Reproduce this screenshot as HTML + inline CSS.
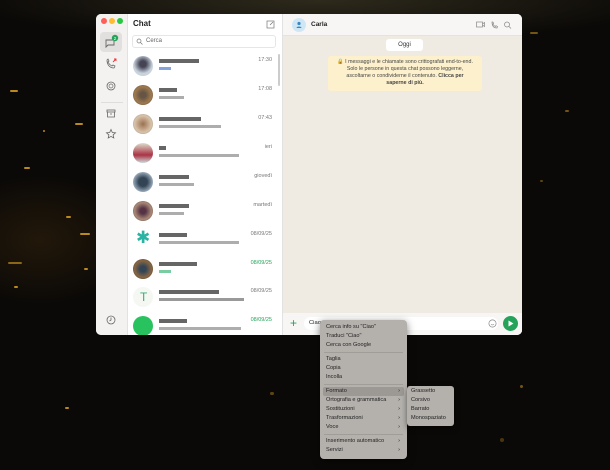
<!DOCTYPE html>
<html><head><meta charset="utf-8"><style>
*{margin:0;padding:0;box-sizing:border-box}
body{width:610px;height:470px;overflow:hidden;position:relative;font-family:"Liberation Sans",sans-serif;
background:radial-gradient(ellipse 500px 60px at 320px 0px,#2e2a1c 0%,rgba(0,0,0,0) 70%),radial-gradient(ellipse 120px 80px at 40px 240px,#22180a 0%,rgba(0,0,0,0) 80%),#0b0907;}
.l{position:absolute;background:#d9a020;border-radius:2px;opacity:.85}
.win{position:absolute;left:96px;top:14px;width:426px;height:321px;background:#fff;border-radius:5px;overflow:hidden}
.side{position:absolute;left:0;top:0;width:32px;height:321px;background:#f3f2f1;border-right:1px solid #e2e2e2}
.list{position:absolute;left:32px;top:0;width:155px;height:321px;background:#fff;border-right:1px solid #e2e2e2}
.conv{position:absolute;left:187px;top:0;width:239px;height:321px;background:#efeae2}
.dot{position:absolute;top:4px;width:6px;height:6px;border-radius:50%}
.row{position:absolute;left:0;width:152px;height:29px}
.av{position:absolute;left:5px;top:4px;width:20px;height:20px;border-radius:50%}
.nm{position:absolute;left:31px;top:7px;height:4px;background:#333;opacity:.75}
.ms{position:absolute;left:31px;top:15px;height:3px;background:#777;opacity:.6}
.tm{position:absolute;right:8px;top:5px;font-size:5.5px;color:#777}
.menu{position:absolute;left:320px;top:320px;width:87px;height:139px;background:#b4b1ad;border-radius:4px;box-shadow:0 2px 8px rgba(0,0,0,.5);font-size:5.6px;color:#222}
.mi{position:absolute;left:6px;height:9px;line-height:9px;width:80px}
.ar{position:absolute;right:6px;top:0}
.sep{position:absolute;left:4px;right:4px;height:1px;background:#a09d99}
.sub{position:absolute;left:407px;top:386px;width:47px;height:40px;background:#b4b1ad;border-radius:3px;box-shadow:0 2px 6px rgba(0,0,0,.5);font-size:5.6px;color:#222}
</style></head><body>
<div class="l" style="left:10px;top:90px;width:8px;height:2px"></div>
<div class="l" style="left:75px;top:123px;width:8px;height:2px"></div>
<div class="l" style="left:24px;top:167px;width:6px;height:2px"></div>
<div class="l" style="left:66px;top:216px;width:5px;height:2px"></div>
<div class="l" style="left:80px;top:233px;width:10px;height:2px"></div>
<div class="l" style="left:8px;top:262px;width:14px;height:2px;opacity:.6"></div>
<div class="l" style="left:14px;top:286px;width:4px;height:2px"></div>
<div class="l" style="left:43px;top:130px;width:2px;height:2px"></div>
<div class="l" style="left:84px;top:268px;width:4px;height:2px"></div>
<div class="l" style="left:530px;top:32px;width:8px;height:2px;opacity:.5"></div>
<div class="l" style="left:565px;top:110px;width:4px;height:2px;opacity:.5"></div>
<div class="l" style="left:540px;top:180px;width:3px;height:2px;opacity:.4"></div>
<div class="l" style="left:270px;top:392px;width:4px;height:3px;opacity:.4"></div>
<div class="l" style="left:65px;top:407px;width:4px;height:2px"></div>
<div class="l" style="left:520px;top:385px;width:3px;height:3px;opacity:.5"></div>
<div class="l" style="left:500px;top:438px;width:4px;height:4px;opacity:.3"></div>

<div class="win">
 <div class="side">
  <div class="dot" style="left:5px;background:#fe5f57"></div>
  <div class="dot" style="left:13px;background:#febc2e"></div>
  <div class="dot" style="left:21px;background:#28c840"></div>
  <div style="position:absolute;left:4px;top:18px;width:22px;height:20px;background:#e1e0df;border-radius:4px"></div>
  <svg style="position:absolute;left:4px;top:18px" width="22" height="20" viewBox="0 0 22 20"><path d="M6 13v-5h8v5h-6l-2 2z" fill="none" stroke="#666" stroke-width=".9"/><circle cx="15" cy="6" r="3.2" fill="#25a35a"/><text x="15" y="8" font-size="4.5" fill="#fff" text-anchor="middle" font-family="Liberation Sans">2</text></svg>
  <svg style="position:absolute;left:8px;top:43px" width="14" height="14" viewBox="0 0 14 14"><path d="M3 3c0 5 3 8 7 8l1-2-2-1-1 1c-2-1-3-2-4-4l1-1-1-2z" fill="none" stroke="#666" stroke-width=".8"/><path d="M9 5l3-3M10 2h2v2" stroke="#e33" stroke-width=".9" fill="none"/></svg>
  <svg style="position:absolute;left:9px;top:66px" width="12" height="12" viewBox="0 0 12 12"><circle cx="6" cy="6" r="4" fill="none" stroke="#666" stroke-width=".8"/><circle cx="6" cy="6" r="2" fill="none" stroke="#666" stroke-width=".7"/></svg>
  <div style="position:absolute;left:5px;top:88px;width:22px;height:1px;background:#ddd"></div>
  <svg style="position:absolute;left:9px;top:94px" width="12" height="12" viewBox="0 0 12 12"><rect x="2" y="2" width="8" height="2" fill="none" stroke="#666" stroke-width=".8"/><path d="M2.5 4v5h7V4M5 6h2" fill="none" stroke="#666" stroke-width=".8"/></svg>
  <svg style="position:absolute;left:9px;top:114px" width="12" height="12" viewBox="0 0 12 12"><path d="M6 1.5l1.3 3 3.2.3-2.4 2.1.7 3.1L6 8.4 3.2 10l.7-3.1L1.5 4.8l3.2-.3z" fill="none" stroke="#666" stroke-width=".8"/></svg>
  <svg style="position:absolute;left:9px;top:300px" width="12" height="12" viewBox="0 0 12 12"><circle cx="6" cy="6" r="4" fill="none" stroke="#666" stroke-width=".8"/><path d="M6 3.5V6l-1.5 1" fill="none" stroke="#666" stroke-width=".8"/></svg>
 </div>
 <div class="list">
  <div style="position:absolute;left:5px;top:5px;font-size:8px;font-weight:bold;color:#222">Chat</div>
  <svg style="position:absolute;left:138px;top:6px" width="9" height="9" viewBox="0 0 9 9"><rect x="1" y="1" width="7" height="7" fill="none" stroke="#777" stroke-width=".7"/><path d="M4 5l3-3" stroke="#777" stroke-width=".7"/></svg>
  <div style="position:absolute;left:4px;top:21px;width:144px;height:13px;border:1px solid #e6e6e6;border-radius:3px;font-size:6px;color:#666;line-height:11px;padding-left:13px">Cerca</div>
  <svg style="position:absolute;left:8px;top:24px" width="7" height="7" viewBox="0 0 7 7"><circle cx="3" cy="3" r="2" fill="none" stroke="#777" stroke-width=".7"/><path d="M4.5 4.5l2 2" stroke="#777" stroke-width=".7"/></svg>
  <div style="position:absolute;left:150px;top:40px;width:2px;height:32px;background:#ccc;border-radius:1px"></div>

  <div class="row" style="top:38px"><div class="av" style="background:radial-gradient(circle at 50% 40%,#445 20%,#c9d3dd 60%)"></div><div class="nm" style="width:40px"></div><div class="ms" style="width:12px;background:#36c"></div><div class="tm">17:30</div></div>
  <div class="row" style="top:67px"><div class="av" style="background:radial-gradient(circle,#654 20%,#a07a50 60%,#332)"></div><div class="nm" style="width:18px"></div><div class="ms" style="width:25px"></div><div class="tm">17:08</div></div>
  <div class="row" style="top:96px"><div class="av" style="background:radial-gradient(circle,#9a7050,#d9c3aa 60%,#776)"></div><div class="nm" style="width:42px"></div><div class="ms" style="width:62px"></div><div class="tm">07:43</div></div>
  <div class="row" style="top:125px"><div class="av" style="background:linear-gradient(#ddc,#a34 60%,#cdd)"></div><div class="nm" style="width:7px"></div><div class="ms" style="width:80px"></div><div class="tm">ieri</div></div>
  <div class="row" style="top:154px"><div class="av" style="background:radial-gradient(circle,#345 30%,#9ab 70%)"></div><div class="nm" style="width:30px"></div><div class="ms" style="width:35px"></div><div class="tm">giovedì</div></div>
  <div class="row" style="top:183px"><div class="av" style="background:radial-gradient(circle,#534 20%,#a87 60%,#432)"></div><div class="nm" style="width:30px"></div><div class="ms" style="width:25px"></div><div class="tm">martedì</div></div>
  <div class="row" style="top:212px"><div class="av" style="background:#fff"><span style="position:absolute;left:3px;top:-2px;font-size:17px;color:#2bb3a3">✱</span></div><div class="nm" style="width:28px"></div><div class="ms" style="width:80px"></div><div class="tm">08/09/25</div></div>
  <div class="row" style="top:241px"><div class="av" style="background:radial-gradient(circle,#345 20%,#864 60%,#321)"></div><div class="nm" style="width:38px"></div><div class="ms" style="width:12px;background:#2a6"></div><div class="tm" style="color:#25a35a">08/09/25</div></div>
  <div class="row" style="top:269px"><div class="av" style="background:#f4f7f2"><span style="position:absolute;left:7px;top:3px;font-size:12px;color:#4a7">T</span></div><div class="nm" style="width:60px"></div><div class="ms" style="width:85px;background:#555"></div><div class="tm">08/09/25</div></div>
  <div class="row" style="top:298px"><div class="av" style="background:#28c25e"></div><div class="nm" style="width:28px"></div><div class="ms" style="width:82px"></div><div class="tm" style="color:#25a35a">08/09/25</div></div>
 </div>
 <div class="conv">
  <div style="position:absolute;left:0;top:0;width:239px;height:22px;background:#f7f6f5;border-bottom:1px solid #e6e3df"></div>
  <div style="position:absolute;left:9px;top:4px;width:14px;height:14px;border-radius:50%;background:#cfe7f5"></div>
  <svg style="position:absolute;left:9px;top:4px" width="14" height="14" viewBox="0 0 14 14"><circle cx="7" cy="5.5" r="1.6" fill="#3a86c4"/><path d="M4.5 10c0-2 5-2 5 0z" fill="#3a86c4"/></svg>
  <div style="position:absolute;left:28px;top:7px;font-size:6.5px;color:#222;font-weight:bold">Carla</div>
  <svg style="position:absolute;left:193px;top:6px" width="40" height="10" viewBox="0 0 40 10"><rect x="0.5" y="2" width="6" height="5" fill="none" stroke="#888" stroke-width=".7"/><path d="M6.5 4l2-1.5v4L6.5 5" fill="none" stroke="#888" stroke-width=".7"/><path d="M16 2c0 4 2 6 5 6l.5-1.5-1.5-.8-.8.8c-1-.6-1.8-1.4-2.4-2.4l.8-.8L16.8 2z" fill="none" stroke="#888" stroke-width=".7"/><circle cx="31" cy="4.5" r="2.5" fill="none" stroke="#888" stroke-width=".7"/><path d="M33 6.5l2 2" stroke="#888" stroke-width=".7"/></svg>
  <div style="position:absolute;left:103px;top:25px;width:37px;height:12px;background:#fff;border-radius:3px;font-size:6px;text-align:center;line-height:12px;color:#333">Oggi</div>
  <div style="position:absolute;left:45px;top:42px;width:154px;height:35px;background:#fdf1cd;border-radius:3px;font-size:5.3px;line-height:7px;text-align:center;color:#444;padding-top:3px">🔒 I messaggi e le chiamate sono crittografati end-to-end.<br>Solo le persone in questa chat possono leggerne,<br>ascoltarne o condividerne il contenuto. <b>Clicca per<br>saperne di più.</b></div>
  <div style="position:absolute;left:0;top:299px;width:239px;height:22px;background:#f7f6f5"></div>
  <div style="position:absolute;left:7px;top:302px;font-size:12px;color:#25a35a;line-height:14px">+</div>
  <div style="position:absolute;left:21px;top:303px;width:194px;height:13px;background:#fff;border-radius:7px;font-size:5.8px;line-height:13px;padding-left:5px;color:#222">Ciao</div>
  <svg style="position:absolute;left:205px;top:305px" width="9" height="9" viewBox="0 0 9 9"><circle cx="4.5" cy="4.5" r="3.6" fill="none" stroke="#888" stroke-width=".7"/><path d="M3 5.2c.8 1 2.2 1 3 0" fill="none" stroke="#888" stroke-width=".6"/></svg>
  <div style="position:absolute;left:220px;top:302px;width:15px;height:15px;border-radius:50%;background:#25a35a"></div>
  <svg style="position:absolute;left:220px;top:302px" width="15" height="15" viewBox="0 0 15 15"><path d="M5.5 4.5l5 3-5 3z" fill="#fff"/></svg>
 </div>
</div>

<div class="menu">
 <div class="mi" style="top:3px">Cerca info su "Ciao"</div>
 <div class="mi" style="top:12px">Traduci "Ciao"</div>
 <div class="mi" style="top:21px">Cerca con Google</div>
 <div class="sep" style="top:32px"></div>
 <div class="mi" style="top:35px">Taglia</div>
 <div class="mi" style="top:44px">Copia</div>
 <div class="mi" style="top:53px">Incolla</div>
 <div class="sep" style="top:64px"></div>
 <div style="position:absolute;left:3px;top:67px;width:81px;height:9px;background:#9c9995;border-radius:2px"></div>
 <div class="mi" style="top:67px">Formato<span class="ar">›</span></div>
 <div class="mi" style="top:76px">Ortografia e grammatica<span class="ar">›</span></div>
 <div class="mi" style="top:85px">Sostituzioni<span class="ar">›</span></div>
 <div class="mi" style="top:94px">Trasformazioni<span class="ar">›</span></div>
 <div class="mi" style="top:103px">Voce<span class="ar">›</span></div>
 <div class="sep" style="top:114px"></div>
 <div class="mi" style="top:117px">Inserimento automatico<span class="ar">›</span></div>
 <div class="mi" style="top:126px">Servizi<span class="ar">›</span></div>
</div>
<div class="sub">
 <div class="mi" style="top:1px;left:4px">Grassetto</div>
 <div class="mi" style="top:10px;left:4px">Corsivo</div>
 <div class="mi" style="top:19px;left:4px">Barrato</div>
 <div class="mi" style="top:28px;left:4px">Monospaziato</div>
</div>
</body></html>
